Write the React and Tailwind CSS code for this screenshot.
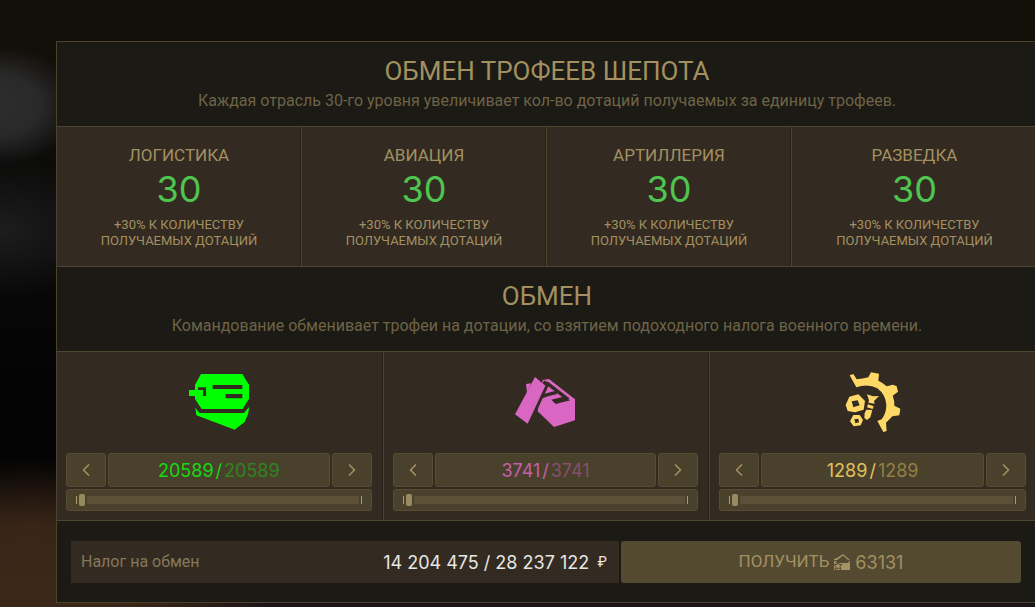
import { ChevronLeft, ChevronRight } from "lucide-react";

const branches = [
  { name: "ЛОГИСТИКА", level: 30 },
  { name: "АВИАЦИЯ", level: 30 },
  { name: "АРТИЛЛЕРИЯ", level: 30 },
  { name: "РАЗВЕДКА", level: 30 },
];

const trophies = [
  {
    id: "helmets",
    label: "Шлемы",
    amount: 20589,
    Icon: HelmetIcon,
    color: "text-[#12da12]",
    muted: "text-[#2e8420]",
  },
  {
    id: "materials",
    label: "Материалы",
    amount: 3741,
    Icon: MaterialIcon,
    color: "text-[#c35fae]",
    muted: "text-[#86506d]",
  },
  {
    id: "parts",
    label: "Детали",
    amount: 1289,
    Icon: PartsIcon,
    color: "text-[#e0c25c]",
    muted: "text-[#937f42]",
  },
];

function HelmetIcon() {
  return (
    <svg viewBox="57 36 180 180" className="size-[60px] fill-[#00ff00]" aria-hidden="true">
      <path
        fillRule="evenodd"
        d="M93 42H217L237 74V116L218 147H95L75 117V108H57V90H75V74ZM84 82V90H99V108H108V82ZM128 75V87H217V75ZM167 102V115H217V102Z"
      />
      <path d="M76 143L88 159H222L237 141L235 160L224 186L194 209L79 166Z" />
      <path d="M57 91H99V108H57Z" />
    </svg>
  );
}

function MaterialIcon() {
  return (
    <svg viewBox="48 36 180 180" className="size-[60px] fill-[#d966c2]" aria-hidden="true">
      <path d="M131 60L150 57L228 118V181L165 201L116 154Z" />
      <g className="fill-none stroke-[#332b22] stroke-[10]">
        <path d="M133 66L145 73L110 148" />
        <path d="M134 69L146 71L208 119" />
        <path d="M131 109L146 104L173 97" />
      </g>
      <path d="M157 119L190 111L214 121L170 132Z" className="fill-[#332b22]" />
      <path d="M81 72L97 70L84 98Z" />
      <path d="M108 51L139 77L86 191L48 163Z" />
    </svg>
  );
}

function PartsIcon() {
  return (
    <svg viewBox="42 36 180 180" className="size-[60px] fill-[#ffd966]" aria-hidden="true">
      <path d="M62 46L73 42L83 58Q101 57 118 52L126 37L150 41L148 62Q162 68 173 79L192 74L203 79L207 95L191 107Q197 121 196 137L214 146L211 166L190 169Q182 178 171 188L173 213L163 216L145 183L158 178Q172 160 172 135Q170 104 145 85Q117 69 82 82Z" />
      <path fillRule="evenodd" d="M61 110L88 103L108 123L104 149L78 157L56 153L50 135ZM68 124L86 121L92 136L73 142Z" />
      <path fillRule="evenodd" d="M73 165L92 165L102 180L95 196L74 199L63 184ZM76 178L88 176L90 187L79 190Z" />
      <path d="M114 103L132 109L150 108L135 123L137 131L118 128L120 121Z" />
      <path d="M117 133L134 139L131 147L114 142Z" />
      <path d="M112 149L130 150L124 172L114 180L106 174L107 160Z" />
    </svg>
  );
}

function SubsidyIcon() {
  return (
    <svg viewBox="0 0 16 16" className="size-4 fill-[#a39366]" aria-hidden="true">
      <path d="M0 5L3 4L9 0L16 6H14L9 1.5L4 5.5L3 6H0Z" />
      <path d="M0 7H3L1 9H0ZM15 7H16V9L14 8Z" />
      <path d="M0 9H16V16H0Z" />
      <path
        d="M4 7.5L5 10.5H8L6 12.5L7 15.5L4 14L1 15.5L2 12.5L0 10.5H3Z"
        className="stroke-[#534a31] stroke-[1]"
      />
    </svg>
  );
}

function SectionHeader({ title, text }) {
  return (
    <div className="px-4 pt-[11px] pb-[13px] text-center">
      <h2 className="text-[26px] leading-9 text-[#a39060]">{title}</h2>
      <p className="text-base leading-6 text-[#6e6346]">{text}</p>
    </div>
  );
}

function BranchCard({ name, level }) {
  return (
    <div className="border-r border-[#4d452f] pt-4 pb-[17px] text-center text-[#a39060] shadow-[inset_-1px_0_0_#29221a] last:border-r-0">
      <h3 className="text-[17px] leading-6">{name}</h3>
      <div className="font-['Inter',sans-serif] text-[36px] leading-[44px] text-[#4fc54f]">{level}</div>
      <p className="mt-1.5 text-[13px] leading-4">
        +30% К КОЛИЧЕСТВУ
        <br />
        ПОЛУЧАЕМЫХ ДОТАЦИЙ
      </p>
    </div>
  );
}

function StepButton({ label, children }) {
  return (
    <button
      type="button"
      aria-label={label}
      className="flex w-10 items-center justify-center rounded-[3px] border border-[#574d32] bg-[#4a412c] text-[#a39060]"
    >
      {children}
    </button>
  );
}

function TrophyCard({ trophy }) {
  const { id, label, amount, Icon, color, muted } = trophy;

  return (
    <div className="border-r border-[#4d452f] pt-5 pr-[11px] pb-[9px] pl-[9px] shadow-[inset_-1px_0_0_#29221a] last:border-r-0">
      <div className="flex justify-center">
        <Icon />
      </div>
      <div className="mt-[21px] flex h-[34px] gap-0.5">
        <StepButton label="Меньше">
          <ChevronLeft className="size-5" strokeWidth={2} />
        </StepButton>
        <output
          htmlFor={id}
          className={`flex flex-1 items-center justify-center rounded-[3px] border border-[#574d32] bg-[#4a412c] font-['Inter',sans-serif] text-[18px] ${color}`}
        >
          {amount}
          <span className="px-0.5">/</span>
          <span className={muted}>{amount}</span>
        </output>
        <StepButton label="Больше">
          <ChevronRight className="size-5" strokeWidth={2} />
        </StepButton>
      </div>
      <div className="mt-0.5 flex h-[22px] items-center gap-0.5 rounded-[3px] border border-[#574d32] bg-[#4a412c] px-[9px]">
        <span className="h-2 w-px bg-[#b09a66]" />
        <input
          id={id}
          type="range"
          aria-label={label}
          min="0"
          max={amount}
          defaultValue="0"
          className="h-2 min-w-0 flex-1 appearance-none bg-[#5c5038] [&::-webkit-slider-thumb]:h-3 [&::-webkit-slider-thumb]:w-1.5 [&::-webkit-slider-thumb]:appearance-none [&::-webkit-slider-thumb]:rounded-xs [&::-webkit-slider-thumb]:bg-[#988a5f] [&::-webkit-slider-thumb]:shadow-[2px_0_0_#4a412c]"
        />
        <span className="h-2 w-px bg-[#b09a66]" />
      </div>
    </div>
  );
}

export default function App() {
  return (
    <main className="min-h-screen overflow-hidden bg-[#0a0a09] bg-[radial-gradient(ellipse_80px_60px_at_0px_105px,#2d2d2d_0%,#292929_50%,transparent_100%),radial-gradient(ellipse_120px_70px_at_0px_230px,#1c1d1c,transparent),radial-gradient(ellipse_240px_130px_at_30px_590px,#3c2819_0%,#382517_50%,transparent_100%),linear-gradient(#120e08_0px,#120e08_50px,#0c0c0b_150px,#030303_400px,#050404_480px,#1d1418_100%)] pt-[41px] pl-14 font-['Roboto',sans-serif]">
      <div className="-mr-[3px] border border-[#4a422d] bg-[#1b1a15]">
        <SectionHeader
          title="ОБМЕН ТРОФЕЕВ ШЕПОТА"
          text="Каждая отрасль 30-го уровня увеличивает кол-во дотаций получаемых за единицу трофеев."
        />
        <div className="grid grid-cols-4 border-y border-[#4d452f] bg-[#332b22]">
          {branches.map((branch) => (
            <BranchCard key={branch.name} {...branch} />
          ))}
        </div>
        <SectionHeader
          title="ОБМЕН"
          text="Командование обменивает трофеи на дотации, со взятием подоходного налога военного времени."
        />
        <div className="grid grid-cols-3 border-y border-[#4d452f] bg-[#332b22]">
          {trophies.map((trophy) => (
            <TrophyCard key={trophy.id} trophy={trophy} />
          ))}
        </div>
        <div className="flex gap-0.5 pt-5 pr-4 pb-[19px] pl-3.5">
          <div className="flex h-[42px] flex-1 items-center justify-between bg-[#332b22] pr-3 pl-2.5">
            <span className="text-base text-[#85775a]">Налог на обмен</span>
            <span className="flex items-center gap-2 font-['Inter',sans-serif] text-[18px] text-[#e8e6e2]">
              14 204 475 / 28 237 122
              <span className="text-sm">₽</span>
            </span>
          </div>
          <button
            type="button"
            className="flex h-[42px] w-[400px] items-center justify-center gap-[5px] rounded-[3px] bg-[#534a31] text-[17px] text-[#a39060]"
          >
            ПОЛУЧИТЬ
            <SubsidyIcon />
            <span className="font-['Inter',sans-serif] text-[18px]">63131</span>
          </button>
        </div>
      </div>
    </main>
  );
}
